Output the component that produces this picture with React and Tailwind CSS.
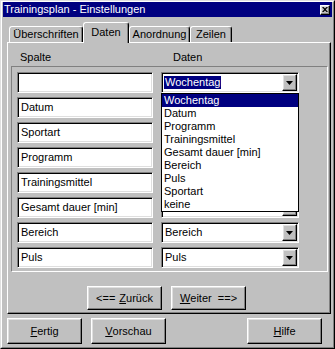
import React from "react";

const sunken =
  "bg-white border border-t-[#808080] border-l-[#808080] border-b-white border-r-white shadow-[inset_1px_1px_0_#000,inset_-1px_-1px_0_#dfdfdf]";
const raised =
  "bg-[#c0c0c0] border border-t-white border-l-white border-b-black border-r-black shadow-[inset_-1px_-1px_0_#808080,inset_1px_1px_0_#dfdfdf]";

// rows 2-6 of the Daten column sit under the open list, so their text is not shown
const rows = [
  { spalte: "", daten: "Wochentag" },
  { spalte: "Datum", daten: "" },
  { spalte: "Sportart", daten: "" },
  { spalte: "Programm", daten: "" },
  { spalte: "Trainingsmittel", daten: "" },
  { spalte: "Gesamt dauer [min]", daten: "" },
  { spalte: "Bereich", daten: "Bereich" },
  { spalte: "Puls", daten: "Puls" },
];

const options = [
  "Wochentag",
  "Datum",
  "Programm",
  "Trainingsmittel",
  "Gesamt dauer [min]",
  "Bereich",
  "Puls",
  "Sportart",
  "keine",
];

function Arrow() {
  return (
    <div className={`${raised} w-[15px] h-full flex items-center justify-center`}>
      <svg width="7" height="4" viewBox="0 0 7 4">
        <path d="M0 0h7L3.5 4z" fill="#000" />
      </svg>
    </div>
  );
}

function Combo({ value, selected, open }) {
  return (
    <div className="relative w-[138px] h-[21px]">
      <div className={`${sunken} w-full h-full flex items-stretch p-[1px]`}>
        <div className="flex-1 flex items-center pl-[1px]">
          {value && (
            <span
              className={
                selected
                  ? "bg-[#000080] text-white px-[1px] leading-[13px]"
                  : "px-[1px] leading-[13px]"
              }
            >
              {value}
            </span>
          )}
        </div>
        <Arrow />
      </div>
      {open && (
        <div className="absolute left-0 top-full w-[138px] bg-white border border-black z-20">
          {options.map((o, i) => (
            <div
              key={o}
              className={
                i === 0
                  ? "bg-[#000080] text-white h-[13px] leading-[13px] pl-[2px]"
                  : "h-[13px] leading-[13px] pl-[2px]"
              }
            >
              {o}
            </div>
          ))}
        </div>
      )}
    </div>
  );
}

function Button({ children, w = "w-[75px]", h = "h-[24px]" }) {
  return (
    <div className={`${raised} ${w} ${h} flex items-center justify-center`}>
      {children}
    </div>
  );
}

function Tab({ label, w, active }) {
  return (
    <div
      className={
        active
          ? `${w} h-[21px] mb-[-1px] relative z-10 bg-[#c0c0c0] border-t border-l border-t-white border-l-white border-r border-r-black shadow-[inset_-1px_0_0_#808080] rounded-t-[3px] flex items-center justify-center pb-[1px]`
          : `${w} h-[16px] bg-[#c0c0c0] border-t border-l border-t-white border-l-white border-r border-r-black shadow-[inset_-1px_0_0_#808080] rounded-t-[3px] flex items-center justify-center`
      }
    >
      {label}
    </div>
  );
}

export default function App() {
  return (
    <div
      className="w-[335px] h-[349px] bg-[#c0c0c0] border border-t-[#dfdfdf] border-l-[#dfdfdf] border-b-black border-r-black text-[11px] text-black"
      style={{ fontFamily: '"Liberation Sans", Arial, sans-serif' }}
    >
      <div className="w-full h-full border border-t-white border-l-white border-b-[#808080] border-r-[#808080] px-[1px] flex flex-col">
        {/* title bar */}
        <div className="h-[15px] bg-[#000080] flex items-center pl-[1px] pr-[2px]">
          <span className="text-white leading-[13px] flex-1">
            Trainingsplan - Einstellungen
          </span>
          <div className={`${raised} w-[10px] h-[10px] flex items-center justify-center`}>
            <svg width="6" height="5" viewBox="0 0 6 5">
              <path d="M0 0h1.5L3 1.6 4.5 0H6L3.8 2.5 6 5H4.5L3 3.4 1.5 5H0l2.2-2.5z" fill="#000" />
            </svg>
          </div>
        </div>

        {/* tabs */}
        <div className="h-[25px] flex items-end pl-[6px]">
          <Tab label="Überschriften" w="w-[74px]" />
          <Tab label="Daten" w="w-[46px]" active />
          <Tab label="Anordnung" w="w-[61px]" />
          <Tab label="Zeilen" w="w-[42px]" />
        </div>

        {/* panel */}
        <div className="ml-[4px] mr-[1px] h-[272px] border border-t-white border-l-white border-b-black border-r-black shadow-[inset_-1px_-1px_0_#808080] flex flex-col">
          <div className="h-[23px] flex pt-[8px] leading-[13px]">
            <span className="ml-[12px] w-[153px]">Spalte</span>
            <span>Daten</span>
          </div>
          <div className="ml-[3px] mr-[2px] h-[206px] border border-t-[#808080] border-l-[#808080] border-b-white border-r-white pt-[5px] pl-[5px] flex flex-col gap-[4px]">
            {rows.map((r, i) => (
              <div key={i} className="flex gap-[8px]">
                <div className={`${sunken} w-[136px] h-[21px] flex items-center pl-[3px] leading-[13px]`}>
                  {r.spalte}
                </div>
                <Combo value={r.daten} selected={i === 0} open={i === 0} />
              </div>
            ))}
          </div>
          <div className="flex mt-[14px] ml-[79px] gap-[9px]">
            <Button>
              &lt;== <span className="underline underline-offset-[1px] ml-[4px]">Z</span>urück
            </Button>
            <Button>
              <span className="underline underline-offset-[1px]">W</span>eiter&nbsp; ==&gt;
            </Button>
          </div>
        </div>

        {/* bottom buttons */}
        <div className="flex mt-[4px] ml-[4px] mr-[10px]">
          <Button h="h-[26px]">
            <span className="underline underline-offset-[1px]">F</span>ertig
          </Button>
          <div className="ml-[9px]">
            <Button h="h-[26px]">
              <span className="underline underline-offset-[1px]">V</span>orschau
            </Button>
          </div>
          <div className="ml-auto">
            <Button h="h-[26px]">
              <span className="underline underline-offset-[1px]">H</span>ilfe
            </Button>
          </div>
        </div>
      </div>
    </div>
  );
}
